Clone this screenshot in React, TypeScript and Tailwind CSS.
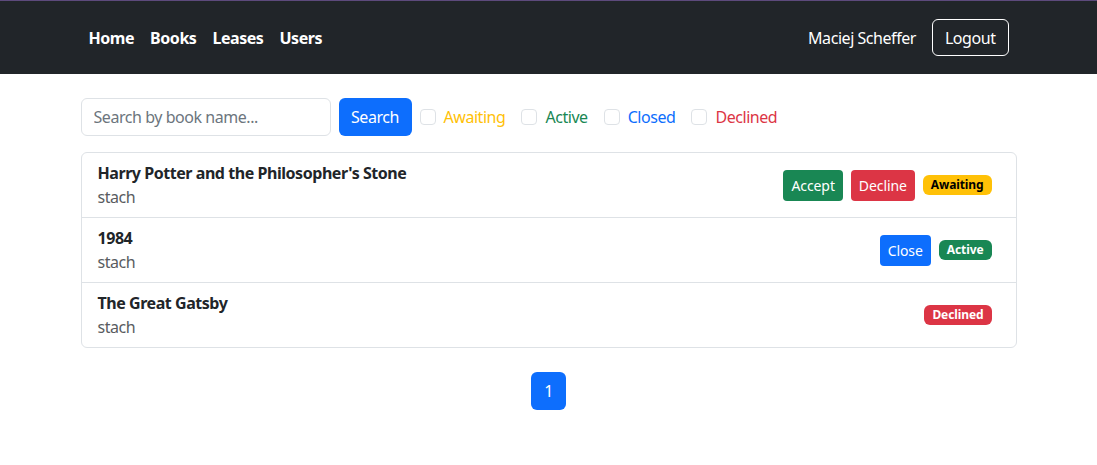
import { useState } from 'react'

type Lease = {
  title: string
  user: string
  status: 'Awaiting' | 'Active' | 'Declined'
}

const leases: Lease[] = [
  { title: "Harry Potter and the Philosopher's Stone", user: 'stach', status: 'Awaiting' },
  { title: '1984', user: 'stach', status: 'Active' },
  { title: 'The Great Gatsby', user: 'stach', status: 'Declined' },
]

const filters = [
  { label: 'Awaiting', color: 'text-[#ffc107]' },
  { label: 'Active', color: 'text-[#198754]' },
  { label: 'Closed', color: 'text-[#0d6efd]' },
  { label: 'Declined', color: 'text-[#dc3545]' },
]

function Badge({ status }: { status: Lease['status'] }) {
  const cls =
    status === 'Awaiting'
      ? 'bg-[#ffc107] text-black'
      : status === 'Active'
        ? 'bg-[#198754] text-white'
        : 'bg-[#dc3545] text-white'
  return (
    <span className={`ml-2 mr-[8px] inline-block rounded-[6px] px-[8px] py-[4px] text-[12px] font-bold leading-[12px] ${cls}`}>
      {status}
    </span>
  )
}

export default function App() {
  const [search, setSearch] = useState('')

  return (
    <div className="min-h-[465px] bg-white text-[16px] tracking-[-0.45px] text-[#212529] font-['Noto_Sans',sans-serif]">
      <nav className="h-[74px] border-t border-[#5d4a7c] bg-[#212529]">
        <div className="mx-auto flex h-full w-[960px] items-center justify-between px-3">
          <div className="flex items-center">
            {['Home', 'Books', 'Leases', 'Users'].map((item) => (
              <a key={item} href="#" className="px-2 py-2 font-bold text-white">
                {item}
              </a>
            ))}
          </div>
          <div className="mr-2 flex items-center gap-4">
            <span className="text-white">Maciej Scheffer</span>
            <button className="h-[37px] rounded-[6px] border border-white px-3 text-white">Logout</button>
          </div>
        </div>
      </nav>

      <main className="mx-auto w-[960px] px-3">
        <div className="mt-6 flex items-center">
          <input
            value={search}
            onChange={(e) => setSearch(e.target.value)}
            placeholder="Search by book name..."
            className="h-[38px] w-[250px] rounded-[6px] border border-[#dee2e6] px-3 text-[#212529] placeholder:text-[#6c757d] outline-none"
          />
          <button className="ml-2 h-[38px] w-[73px] rounded-[6px] bg-[#0d6efd] text-white">Search</button>
          {filters.map((f) => (
            <label key={f.label} className="ml-2 mr-[8px] flex items-center gap-2">
              <span className="block h-4 w-4 rounded-[4px] border border-[#dee2e6] bg-white" />
              <span className={f.color}>{f.label}</span>
            </label>
          ))}
        </div>

        <ul className="mt-4 rounded-[6px] border border-[#dee2e6]">
          {leases.map((l, i) => (
            <li
              key={l.title}
              className={`flex items-center justify-between px-4 py-2 ${i > 0 ? 'border-t border-[#dee2e6]' : ''}`}
            >
              <div>
                <div className="font-bold leading-6">{l.title}</div>
                <div className="leading-6 text-[#595c5f]">{l.user}</div>
              </div>
              <div className="flex items-center tracking-[-0.1px]">
                {l.status === 'Awaiting' && (
                  <>
                    <button className="h-[31px] rounded-[4px] bg-[#198754] px-2 text-[14px] text-white">Accept</button>
                    <button className="ml-2 h-[31px] rounded-[4px] bg-[#dc3545] px-2 text-[14px] text-white">Decline</button>
                  </>
                )}
                {l.status === 'Active' && (
                  <button className="h-[31px] rounded-[4px] bg-[#0d6efd] px-2 text-[14px] text-white">Close</button>
                )}
                <Badge status={l.status} />
              </div>
            </li>
          ))}
        </ul>

        <div className="mt-6 flex justify-center">
          <button className="h-[38px] w-[35px] rounded-[6px] bg-[#0d6efd] text-white">1</button>
        </div>
      </main>
    </div>
  )
}
